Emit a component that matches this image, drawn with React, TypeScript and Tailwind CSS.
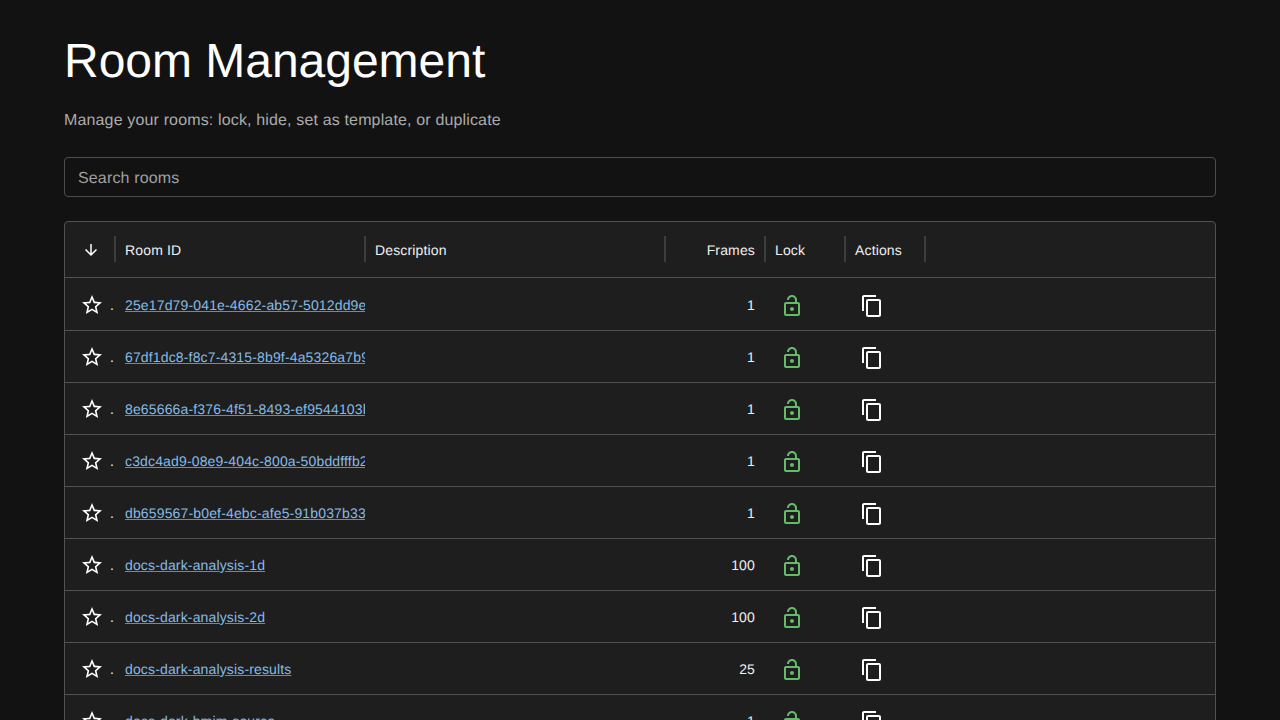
const STAR = "M22 9.24l-7.19-.62L12 2 9.19 8.63 2 9.24l5.46 4.73L5.82 21 12 17.27 18.18 21l-1.63-7.03L22 9.24zM12 15.4l-3.76 2.27 1-4.28-3.32-2.88 4.38-.38L12 6.1l1.71 4.04 4.38.38-3.32 2.88 1 4.28L12 15.4z";
const LOCK = "M12 17c1.1 0 2-.9 2-2s-.9-2-2-2-2 .9-2 2 .9 2 2 2zm6-9h-1V6c0-2.76-2.24-5-5-5S7 3.24 7 6h2c0-1.66 1.34-3 3-3s3 1.34 3 3v2H6c-1.1 0-2 .9-2 2v10c0 1.1.9 2 2 2h12c1.1 0 2-.9 2-2V10c0-1.1-.9-2-2-2zm0 12H6V10h12v10z";
const COPY = "M16 1H4c-1.1 0-2 .9-2 2v14h2V3h12V1zm3 4H8c-1.1 0-2 .9-2 2v14c0 1.1.9 2 2 2h11c1.1 0 2-.9 2-2V7c0-1.1-.9-2-2-2zm0 16H8V7h11v14z";
const ARROW = "M20 12l-1.41-1.41L13 16.17V4h-2v12.17l-5.58-5.59L4 12l8 8 8-8z";

function Icon({ d, className }: { d: string; className: string }) {
  return (
    <svg viewBox="0 0 24 24" fill="currentColor" className={className}>
      <path d={d} />
    </svg>
  );
}

const rows: [string, number][] = [
  ["25e17d79-041e-4662-ab57-5012dd9e4b1c", 1],
  ["67df1dc8-f8c7-4315-8b9f-4a5326a7b9d2", 1],
  ["8e65666a-f376-4f51-8493-ef9544103b6a", 1],
  ["c3dc4ad9-08e9-404c-800a-50bddfffb27e", 1],
  ["db659567-b0ef-4ebc-afe5-91b037b33f18", 1],
  ["docs-dark-analysis-1d", 100],
  ["docs-dark-analysis-2d", 100],
  ["docs-dark-analysis-results", 25],
  ["docs-dark-bmim-source", 1],
];

const grid = "grid grid-cols-[50px_250px_300px_100px_80px_80px_1fr]";

function Separator() {
  return <span className="absolute right-[-1px] top-[14px] h-[26px] w-[2px] bg-[#3d3d3d]" />;
}

function HeaderCell({ label, right }: { label: string; right?: boolean }) {
  return (
    <div className={`relative flex items-center px-2.5 pt-px ${right ? "justify-end" : ""}`}>
      <span>{label}</span>
      <Separator />
    </div>
  );
}

export default function App() {
  return (
    <div
      className="h-screen overflow-hidden bg-[#121212] px-16 pt-[34px] text-white [text-rendering:geometricPrecision]"
      style={{ fontFamily: '"Liberation Sans", Arial, sans-serif' }}
    >
      <h1 className="text-[48px] leading-[56px] font-normal tracking-[-0.02px]">Room Management</h1>
      <p className="mt-[19px] text-[16px] leading-[24px] tracking-[0.15px] text-[#ababab]">
        Manage your rooms: lock, hide, set as template, or duplicate
      </p>
      <div className="mt-[24px] flex h-[40px] items-center rounded border border-[#4d4d4d] px-[13px] pt-[4px] text-[16px] tracking-[0.15px] text-[#a0a0a0]">
        Search rooms
      </div>
      <div className="mt-[24px] rounded border border-[#515151] bg-[#1e1e1e] text-[14px] tracking-[0.15px] text-[#efefef]">
        <div className={`${grid} h-[56px] border-b border-[#515151]`}>
          <div className="relative flex items-center justify-center text-white">
            <Icon d={ARROW} className="h-[18px] w-[18px] translate-x-px" />
            <Separator />
          </div>
          <HeaderCell label="Room ID" />
          <HeaderCell label="Description" />
          <HeaderCell label="Frames" right />
          <HeaderCell label="Lock" />
          <HeaderCell label="Actions" />
          <div />
        </div>
        {rows.map(([id, frames], i) => (
          <div key={id} className={`${grid} h-[52px] ${i > 0 ? "border-t border-[#515151] pt-[2px]" : "pt-[3px]"}`}>
            <div className="flex items-center pb-[2px] pl-[15px] text-white">
              <Icon d={STAR} className="h-[24px] w-[24px]" />
              <span className="ml-[6px] leading-none">.</span>
            </div>
            <div className="flex items-center overflow-hidden pl-2.5">
              <a className="whitespace-nowrap text-[#85bbe8] underline decoration-[#5f8fb8]">{id}</a>
            </div>
            <div />
            <div className="flex items-center justify-end px-2.5">{frames}</div>
            <div className="flex items-center pl-[15px]">
              <Icon d={LOCK} className="h-[24px] w-[24px] text-[#66bb6a]" />
            </div>
            <div className="flex items-center pl-[15px] text-white">
              <Icon d={COPY} className="h-[24px] w-[24px]" />
            </div>
            <div />
          </div>
        ))}
      </div>
    </div>
  );
}
